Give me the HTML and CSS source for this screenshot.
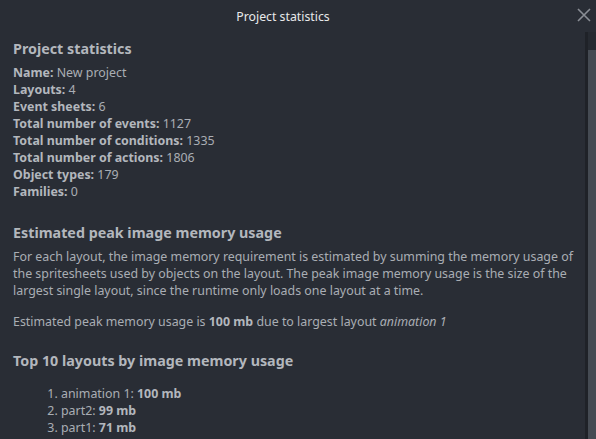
FILE: index.html
```html
<!DOCTYPE html>
<html>
<head>
<meta charset="utf-8">
<link rel="stylesheet" href="styles.css">
</head>
<body>
<div class="dialog">
  <div class="titlebar">
    <span class="title">Project statistics</span>
    <span class="close"><svg width="14" height="14" viewBox="0 0 14 14"><path d="M1 1L13 13M13 1L1 13" stroke="#8a8e95" stroke-width="1.6" fill="none"/></svg></span>
  </div>
  <div class="main">
    <div class="content">
      <h2>Project statistics</h2>
      <div class="line"><b>Name:</b> New project</div>
      <div class="line"><b>Layouts:</b> 4</div>
      <div class="line"><b>Event sheets:</b> 6</div>
      <div class="line"><b>Total number of events:</b> 1127</div>
      <div class="line"><b>Total number of conditions:</b> 1335</div>
      <div class="line"><b>Total number of actions:</b> 1806</div>
      <div class="line"><b>Object types:</b> 179</div>
      <div class="line"><b>Families:</b> 0</div>

      <h2 class="sec">Estimated peak image memory usage</h2>
      <p class="para">For each layout, the image memory requirement is estimated by summing the memory usage of the spritesheets used by objects on the layout. The peak image memory usage is the size of the largest single layout, since the runtime only loads one layout at a time.</p>
      <p class="para">Estimated peak memory usage is <b>100 mb</b> due to largest layout <i>animation 1</i></p>

      <h2 class="sec top">Top 10 layouts by image memory usage</h2>
      <ol class="list">
        <li>animation 1: <b>100 mb</b></li>
        <li>part2: <b>99 mb</b></li>
        <li>part1: <b>71 mb</b></li>
        <li>level select: <b>15 mb</b></li>
      </ol>
    </div>
    <div class="scrollbar"><div class="thumb"></div></div>
  </div>
</div>
</body>
</html>
```
FILE: styles.css
```css
html, body {
  margin: 0;
  padding: 0;
  height: 100%;
  overflow: hidden;
}
body {
  background: #292d35;
  font-family: "Noto Sans", "Open Sans", sans-serif;
  color: #a9adb4;
}
.dialog {
  display: flex;
  flex-direction: column;
  height: 439px;
}
.titlebar {
  height: 32px;
  flex: none;
  display: flex;
  align-items: center;
  justify-content: center;
  position: relative;
}
.title {
  color: #e8e9ea;
  font-size: 12.3px;
  margin-right: 30px;
}
.close {
  position: absolute;
  right: 5px;
  top: 8px;
  width: 14px;
  height: 14px;
  display: block;
}
.close svg { display: block; }
.main {
  flex: 1;
  display: flex;
  min-height: 0;
}
.content {
  flex: 1;
  padding: 0 12px 0 13px;
  overflow: hidden;
}
.scrollbar {
  width: 8px;
  flex: none;
  border-left: 3px solid #1f2228;
  padding-top: 18px;
  background: #262a31;
}
.thumb {
  height: 400px;
  background: #454b53;
}
h2 {
  margin: 7px 0 5px;
  font-size: 14.3px;
  font-weight: bold;
  color: #b3b7bd;
  line-height: 20px;
}
.line {
  font-size: 12.4px;
  line-height: 17px;
}
b { font-weight: bold; color: #b3b7bd; }
.sec { margin-top: 23px; }
.para {
  font-size: 12.4px;
  line-height: 17px;
  margin: 0 0 14px;
}
.top { margin-top: 21px; }
.list {
  font-size: 12.4px;
  line-height: 17px;
  margin: 14px 0 0;
  padding-left: 48px;
}
```
